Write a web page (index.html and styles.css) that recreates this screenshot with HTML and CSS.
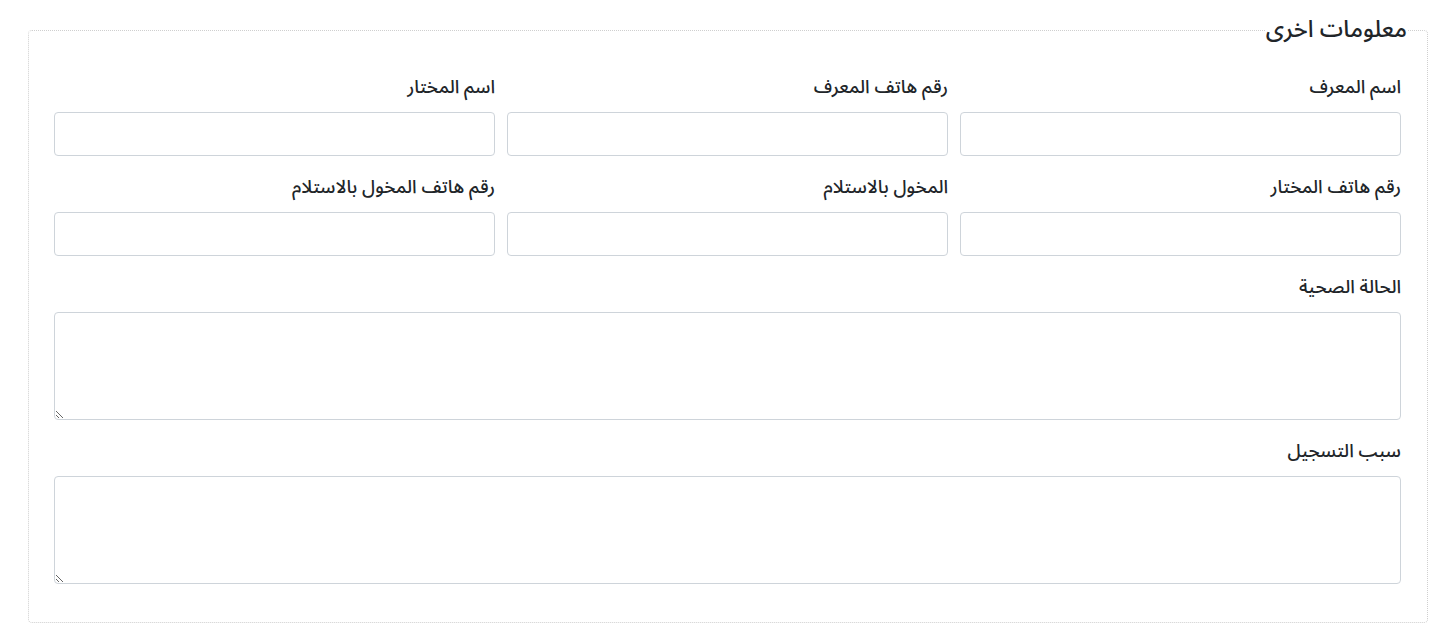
FILE: index.html
```html
<!DOCTYPE html>
<html lang="ar" dir="rtl">
<head>
  <meta charset="UTF-8" />
  <meta name="viewport" content="width=device-width, initial-scale=1.0"/>
  <title>معلومات اخرى</title>
  <link rel="stylesheet" href="styles.css">
</head>

<body>
  <div class="page">
    <fieldset class="info-box">
      <legend>معلومات اخرى</legend>

      <div class="form-body">
        <div class="row">
          <div class="field">
            <label for="idName">اسم المعرف</label>
            <input type="text" id="idName">
          </div>
          <div class="field">
            <label for="idPhone">رقم هاتف المعرف</label>
            <input type="text" id="idPhone">
          </div>
          <div class="field">
            <label for="mukhtarName">اسم المختار</label>
            <input type="text" id="mukhtarName">
          </div>
        </div>

        <div class="row">
          <div class="field">
            <label for="mukhtarPhone">رقم هاتف المختار</label>
            <input type="text" id="mukhtarPhone">
          </div>
          <div class="field">
            <label for="receiver">المخول بالاستلام</label>
            <input type="text" id="receiver">
          </div>
          <div class="field">
            <label for="receiverPhone">رقم هاتف المخول بالاستلام</label>
            <input type="text" id="receiverPhone">
          </div>
        </div>

        <div class="field">
          <label for="health">الحالة الصحية</label>
          <textarea id="health"></textarea>
        </div>

        <div class="field">
          <label for="reason">سبب التسجيل</label>
          <textarea id="reason"></textarea>
        </div>
      </div>
    </fieldset>
  </div>
</body>
</html>
```

FILE: styles.css
```css
html, body {
  margin: 0;
  font-family: "Noto Sans Arabic", "DejaVu Sans", sans-serif;
  background-color: #fff;
  color: #212529;
}

.page {
  padding: 17px 28px 0 28px;
}

.info-box {
  margin: 0;
  padding: 0 20px 38px;
  border: 1px dotted #cfcfcf;
  border-radius: 4px;
  min-width: 0;
}

.info-box legend {
  padding: 0;
  font-size: 23.5px;
  line-height: 26px;
  font-weight: 500;
  color: #212529;
}

.form-body {
  padding: 33px 6px 0 5px;
  display: flex;
  flex-direction: column;
  gap: 20px;
}

.row {
  display: grid;
  grid-template-columns: 1fr 1fr 1fr;
  gap: 12px;
}

.field {
  display: flex;
  flex-direction: column;
}

.field label {
  font-size: 18.5px;
  line-height: 24px;
  font-weight: 500;
  margin-bottom: 12px;
}

.field input[type="text"],
.field textarea {
  box-sizing: border-box;
  width: 100%;
  border: 1px solid #ced4da;
  border-radius: 4px;
  font-family: inherit;
  font-size: 16px;
  padding: 8px 12px;
  background-color: #fff;
}

.field input[type="text"] {
  height: 44px;
}

.field textarea {
  height: 108px;
  resize: vertical;
}
```
